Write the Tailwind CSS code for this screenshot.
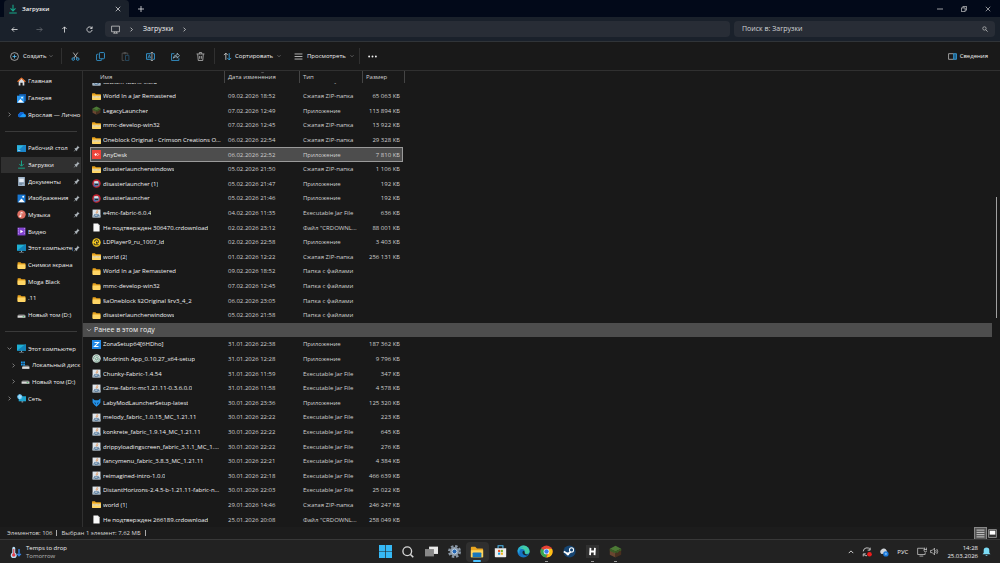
<!DOCTYPE html>
<html lang="ru">
  <head>
    <meta charset="UTF-8" />
    <title>Загрузки</title>
    <script src="https://cdn.jsdelivr.net/npm/@tailwindcss/browser@4"></script>
  </head>
  <body class="h-screen flex flex-col overflow-hidden bg-[#191919] text-[#f0f0f0] text-[6px] leading-[8px] font-['Open_Sans','Noto_Sans',sans-serif]">
    <!-- Icon set -->
    <svg class="hidden">
      <symbol id="folder" viewBox="0 0 16 16"><path d="M1 3q0-1 1-1h4l2 2h6q1 0 1 1v8H1z" fill="#e8a21c" /><path d="M1 6h14v7q0 1-1 1H2q-1 0-1-1z" fill="#ffd666" /></symbol>
      <symbol id="zip" viewBox="0 0 16 16"><path d="M0 3q0-1 1-1h4l2 2h8q1 0 1 1v8H0z" fill="#e8a21c" /><path d="M0 6h16v7q0 1-1 1H1q-1 0-1-1z" fill="#ffd666" /><path d="M1 7.500h14v2.500H1z" fill="#e9dfbe" /><path d="M1 8.500h14" stroke="#a8a08a" stroke-width="1" stroke-dasharray="1.500 1" /></symbol>
      <symbol id="jar" viewBox="0 0 16 16"><path d="M1 1h14v14H1z" fill="#dfe6ec" /><path d="M1 11h14v4H1z" fill="#9fb2c2" /><path d="M9 2c2 2-3 3-1 6M10.500 4.500c-1 1-1 2 0 3" fill="none" stroke="#e07a2c" stroke-width="1.300" /><path d="M4.500 9.500h6v2q0 2-3 2t-3-2zM11 10q2 0 1 1.500l-2 1" fill="none" stroke="#436b92" stroke-width="1.200" /></symbol>
      <symbol id="doc" viewBox="0 0 16 16"><path d="M2.500 1h8l3 3v11h-11z" fill="#fafafa" /><path d="M10.500 1v3h3z" fill="#b9b9b9" /></symbol>
      <symbol id="anydesk" viewBox="0 0 16 16"><path d="M0 0h16v16H0z" fill="#ef443b" /><path d="M6.500 5.500 9 8l-2.500 2.500L4 8z" fill="#fff" /><path d="M9.500 5.500 12 8l-2.500 2.500" fill="none" stroke="#fff" stroke-width="1.200" /></symbol>
      <symbol id="disaster" viewBox="0 0 16 16"><circle cx="8" cy="8" r="7.500" fill="#c4202e" /><path d="M3 6q5-6 10 0v5q-5 5-10 0z" fill="#6f8ca8" /><path d="M4 4h7v3H4z" fill="#e6e6e6" /><path d="M5 9h6v2H5z" fill="#20262e" /><path d="M2 12l4-2 1 4z" fill="#3569c9" /></symbol>
      <symbol id="block" viewBox="0 0 16 16"><path d="M8 1l7 3.500-7 3.500-7-3.500z" fill="#4c7a35" /><path d="M1 4.500 8 8v7.500l-7-3.500z" fill="#6a4630" /><path d="M15 4.500 8 8v7.500l7-3.500z" fill="#48301f" /><path d="M1 4.500 8 8v2L6 8.500V10L4 8v1L1 7zM15 4.500 8 8v2l2-1.500V10l3-3 2 0z" fill="#385f27" /></symbol>
      <symbol id="ldplayer" viewBox="0 0 16 16"><circle cx="8" cy="8" r="7.500" fill="#f5c921" /><path d="M4.500 6.500a3.500 3.500 0 0 1 7 0q0 3-3.500 3v-3" fill="none" stroke="#222" stroke-width="1.700" /><path d="M4 9v3h8" fill="none" stroke="#222" stroke-width="1.500" /></symbol>
      <symbol id="zona" viewBox="0 0 16 16"><path d="M0 0h16v16H0z" fill="#238ae6" /><path d="M4.500 4.500h7l-7 7h7" fill="none" stroke="#fff" stroke-width="2" /></symbol>
      <symbol id="modrinth" viewBox="0 0 16 16"><circle cx="8" cy="8" r="7.500" fill="#d5dedb" /><path d="M3 9a5 5 0 0 1 9-4M13 8a5 5 0 0 1-9 4M6 8l2-2 3 1-1 3-3 1z" fill="none" stroke="#5b9678" stroke-width="1.300" /></symbol>
      <symbol id="laby" viewBox="0 0 16 16"><path d="M1 1l4 3h6l4-3v7l-3 4-4 3.500L4 12 1 8z" fill="#2492e8" /><path d="M4 7l3 2-1 3zM12 7 9 9l1 3z" fill="#0c3f74" /></symbol>
      <symbol id="home" viewBox="0 0 16 16"><path d="M3 7l5-5 5 5v8h-3v-5H6v5H3z" fill="#d9dde2" /><path d="M1 8.500 8 2l7 6.500" fill="none" stroke="#e8702a" stroke-width="2.200" stroke-linejoin="round" /></symbol>
      <symbol id="picture" viewBox="0 0 16 16"><path d="M1 1h14v14H1z" fill="#1877d3" /><path d="M2 14.500 8 8l6 6.500z" fill="#fff" /><circle cx="11" cy="5" r="1.700" fill="#fff" /></symbol>
      <symbol id="gallery" viewBox="0 0 16 16"><path d="M4 0h12v13H4z" fill="#1157a4" /><path d="M0 3h13v13H0z" fill="#2a97f0" /><path d="M1 15l5-6 6 6z" fill="#fff" /><circle cx="9" cy="6.500" r="1.500" fill="#fff" /></symbol>
      <symbol id="cloud" viewBox="0 0 16 16"><path d="M4 13a4 4 0 0 1 0-7 5 5 0 0 1 9 1 3 3 0 0 1 0 6z" fill="#1b9bfa" /><path d="M4 6a5 5 0 0 1 9 1q-3-1-5 2l-4 4a4 4 0 0 1 0-7z" fill="#1262d0" /></symbol>
      <symbol id="desktop" viewBox="0 0 16 16"><path d="M0 2h16v12H0z" fill="#2cb3df" /><path d="M0 14 12 2h4v12z" fill="#1b85c9" /><path d="M2 11h4v1H2z" fill="#fff" /></symbol>
      <symbol id="down" viewBox="0 0 16 16"><path d="M8 1v9.500M4 7l4 4 4-4M2 14.500h12" fill="none" stroke="#16a98c" stroke-width="1.700" /></symbol>
      <symbol id="document" viewBox="0 0 16 16"><path d="M2 0h12v16H2z" fill="#9fb4c9" /><path d="M4 3h8v6H4z" fill="#e5edf5" /><path d="M4 11h8M4 13h5" stroke="#4b6580" /></symbol>
      <symbol id="music" viewBox="0 0 16 16"><circle cx="8" cy="8" r="7.500" fill="#dd6e62" /><path d="M7 11V4l4 1.500" fill="none" stroke="#fff" stroke-width="1.300" /><circle cx="5.800" cy="11" r="1.800" fill="#fff" /></symbol>
      <symbol id="video" viewBox="0 0 16 16"><path d="M1 1h14v14H1z" fill="#8243cf" /><path d="M2.500 2v12M13.500 2v12" stroke="#d9b9ff" stroke-width="1.300" stroke-dasharray="1.500 1.500" /><path d="M6 5l5 3-5 3z" fill="#fff" /></symbol>
      <symbol id="pc" viewBox="0 0 16 16"><path d="M0 1h16v11H0z" fill="#1fb0d4" /><path d="M0 12 14 1h2v11z" fill="#1383b8" /><path d="M7 12h2v2h3v1H4v-1h3z" fill="#8fa3b2" /></symbol>
      <symbol id="drive" viewBox="0 0 16 16"><path d="M3 6h10l2 2H1z" fill="#858585" /><path d="M1 8h14v4H1z" fill="#dadada" /><path d="M10 10h3" stroke="#36b157" stroke-width="1.500" /></symbol>
      <symbol id="sysdrive" viewBox="0 0 16 16"><path d="M4 8h9l2 2H3z" fill="#858585" /><path d="M2 10h13v4H2z" fill="#dadada" /><path d="M0 1h3v3H0zM4 1h3v3H4zM0 5h3v3H0zM4 5h3v3H4z" fill="#1b9af0" /></symbol>
      <symbol id="network" viewBox="0 0 16 16"><path d="M3 4h13v9H3z" fill="#1fa5d0" /><path d="M8 13h3v2H8z" fill="#8fa3b2" /><circle cx="5" cy="5" r="4.500" fill="#58bdf0" /><path d="M1 5h8M5 1q-3 4 0 8M5 1q3 4 0 8" stroke="#d5f0ff" fill="none" /></symbol>
      <symbol id="pin" viewBox="0 0 16 16"><path d="M10 1l5 5-2 1-3 3-1 4-6-6 4-1 3-3zM5.500 9.500 7 11l-6 5z" fill="#a9b1b7" /></symbol>
      <symbol id="right" viewBox="0 0 16 16"><path d="M5 2l6 6-6 6" fill="none" stroke="currentColor" stroke-width="2.200" /></symbol>
      <symbol id="chevron" viewBox="0 0 16 16"><path d="M2 5l6 6 6-6" fill="none" stroke="currentColor" stroke-width="2.200" /></symbol>
      <symbol id="close" viewBox="0 0 16 16"><path d="M2 2l12 12M14 2 2 14" fill="none" stroke="currentColor" stroke-width="1.800" /></symbol>
      <symbol id="arrow" viewBox="0 0 16 16"><path d="M15 8H2M7 3 2 8l5 5" fill="none" stroke="currentColor" stroke-width="1.800" /></symbol>
      <symbol id="search" viewBox="0 0 16 16"><circle cx="6.500" cy="6.500" r="4.500" fill="none" stroke="currentColor" stroke-width="1.800" /><path d="M10 10l5 5" stroke="currentColor" stroke-width="2" /></symbol>
      <symbol id="monitor" viewBox="0 0 16 16"><path d="M1 2h14v10H1zM6 12v2.500M10 12v2.500M4 14.500h8" fill="none" stroke="currentColor" stroke-width="1.400" /></symbol>
    </svg>

    <!-- Title bar -->
    <header class="h-[17px] shrink-0 flex items-center bg-[#020919] pl-1">
      <div class="h-full w-[125px] flex items-center rounded-t bg-[#1a212b] pl-1 pr-2">
        <svg class="size-[10px]"><use href="#down" /></svg>
        <span class="ml-1 flex-1 font-semibold">Загрузки</span>
        <button aria-label="Закрыть вкладку"><svg class="size-[6px]"><use href="#close" /></svg></button>
      </div>
      <button class="ml-[9px]" aria-label="Новая вкладка">
        <svg class="size-[6px]" viewBox="0 0 16 16"><path d="M8 0v16M0 8h16" stroke="currentColor" stroke-width="2" /></svg>
      </button>
      <div class="ml-auto flex text-[#d0d0d0]">
        <button class="w-6 flex justify-center" aria-label="Свернуть"><svg class="size-[6px]" viewBox="0 0 16 16"><path d="M0 8h16" stroke="currentColor" stroke-width="2" /></svg></button>
        <button class="w-6 flex justify-center" aria-label="Восстановить"><svg class="size-[6px]" viewBox="0 0 16 16"><path d="M1 5h10v10H1zM5 4V1h10v10h-3" fill="none" stroke="currentColor" stroke-width="2" /></svg></button>
        <button class="w-6 flex justify-center" aria-label="Закрыть"><svg class="size-[6px]"><use href="#close" /></svg></button>
      </div>
    </header>

    <!-- Navigation -->
    <nav class="h-[25px] shrink-0 flex items-center bg-[#1a212b] border-b border-[#303438] pl-[2px] pr-[5px]">
      <button class="w-[25px] flex justify-center" aria-label="Назад"><svg class="size-[7px]"><use href="#arrow" /></svg></button>
      <button class="w-[25px] flex justify-center text-[#666b72]" aria-label="Вперёд"><svg class="size-[7px] rotate-180"><use href="#arrow" /></svg></button>
      <button class="w-[25px] flex justify-center" aria-label="Вверх"><svg class="size-[7px] rotate-90"><use href="#arrow" /></svg></button>
      <button class="w-[25px] flex justify-center" aria-label="Обновить"><svg class="size-[7px]" viewBox="0 0 16 16"><path d="M14 9a6 6 0 1 1-2-5.500L14 5M14 1v4.500H9.500" fill="none" stroke="currentColor" stroke-width="1.800" /></svg></button>
      <div class="ml-[3px] h-4 flex-1 flex items-center rounded-sm bg-[#282d36] pl-[6px]">
        <svg class="size-[9px] text-[#c8c8c8]"><use href="#monitor" /></svg>
        <svg class="ml-[9px] size-[5px]"><use href="#right" /></svg>
        <a href="#" class="ml-[9px] text-[7px]">Загрузки</a>
        <svg class="ml-[9px] size-[5px]"><use href="#right" /></svg>
      </div>
      <label class="ml-1 h-4 w-[261px] flex items-center rounded-sm bg-[#282d36] pl-2 pr-[7px]">
        <input type="search" aria-label="Поиск" placeholder="Поиск в: Загрузки" class="flex-1 text-[7px] outline-none placeholder:text-[#d0d2d5]" />
        <svg class="size-[6px] text-[#c8c8c8]"><use href="#search" /></svg>
      </label>
    </nav>

    <!-- Commands -->
    <div class="h-[29px] shrink-0 flex items-center border-b border-[#303030] pr-3">
      <button class="ml-[10px] w-[51px] flex items-center">
        <svg class="size-[9px]" viewBox="0 0 16 16"><circle cx="8" cy="8" r="7" fill="none" stroke="#ccc" stroke-width="1.300" /><path d="M8 4.500v7M4.500 8h7" stroke="#55b9ee" stroke-width="1.500" /></svg>
        <span class="ml-1 flex-1 text-left">Создать</span>
        <svg class="mr-2 size-[4px] text-[#999]"><use href="#chevron" /></svg>
      </button>
      <div class="h-4 w-px bg-[#303030]"></div>
      <div class="ml-px flex">
        <button class="w-[25px] flex justify-center" aria-label="Вырезать"><svg class="size-[9px]" viewBox="0 0 16 16"><path d="M4 1l7 10M12 1 5 11" stroke="#ccc" stroke-width="1.400" /><circle cx="4" cy="12.500" r="2.300" fill="none" stroke="#38a7e8" stroke-width="1.500" /><circle cx="12" cy="12.500" r="2.300" fill="none" stroke="#38a7e8" stroke-width="1.500" /></svg></button>
        <button class="w-[25px] flex justify-center" aria-label="Копировать"><svg class="size-[9px]" viewBox="0 0 16 16"><path d="M4 4H2q-1 0-1 1v9q0 1 1 1h7q1 0 1-1v-1" fill="none" stroke="#38a7e8" stroke-width="1.400" /><rect x="6" y="1" width="9" height="11" rx="1.500" fill="none" stroke="#38a7e8" stroke-width="1.500" /></svg></button>
        <button class="w-[25px] flex justify-center" aria-label="Вставить" disabled><svg class="size-[9px]" viewBox="0 0 16 16"><path d="M6 15H2V2h10v3M5 1h4v2H5z" fill="none" stroke="#555" stroke-width="1.400" /><path d="M8 6h6v9H8z" fill="none" stroke="#2a5470" stroke-width="1.400" /></svg></button>
        <button class="w-[25px] flex justify-center" aria-label="Переименовать"><svg class="size-[9px]" viewBox="0 0 16 16"><path d="M9 3H1v10h8M12 3h3v10h-3" fill="none" stroke="#38a7e8" stroke-width="1.500" /><path d="M3.500 11 6 5l2.500 6M4.500 9h3" fill="none" stroke="#38a7e8" stroke-width="1.200" /><path d="M10.500 1v14M8.500 .7h4M8.500 15.300h4" stroke="#ccc" stroke-width="1.300" /></svg></button>
        <button class="w-[25px] flex justify-center" aria-label="Поделиться"><svg class="size-[9px]" viewBox="0 0 16 16"><path d="M6 3H1v12h13v-4" fill="none" stroke="#38a7e8" stroke-width="1.400" /><path d="M4 11q1-6 7-6V2l4 4.500-4 4.500V8q-4 0-7 3z" fill="none" stroke="#a8cde2" stroke-width="1.300" /></svg></button>
        <button class="w-[25px] flex justify-center" aria-label="Удалить"><svg class="size-[9px]" viewBox="0 0 16 16"><path d="M1 3.500h14M3 4l1 11h8l1-11M6 3V1h4v2M6.500 7v5M9.500 7v5" fill="none" stroke="#ccc" stroke-width="1.300" /></svg></button>
      </div>
      <div class="ml-px h-4 w-px bg-[#303030]"></div>
      <button class="ml-2 w-[70px] flex items-center">
        <svg class="size-[9px]" viewBox="0 0 16 16"><path d="M5 14V2M1.500 5.500 5 2l3.500 3.500" fill="none" stroke="#ccc" stroke-width="1.500" /><path d="M11 2v12M7.500 10.500 11 14l3.500-3.500" fill="none" stroke="#38a7e8" stroke-width="1.500" /></svg>
        <span class="ml-[3px]">Сортировать</span>
        <svg class="ml-1 size-[4px] text-[#999]"><use href="#chevron" /></svg>
      </button>
      <button class="flex items-center w-[66px]">
        <svg class="ml-px size-[9px]" viewBox="0 0 16 16"><path d="M1 3.500h14M1 8h14M1 12.500h14" stroke="#ccc" stroke-width="1.500" /></svg>
        <span class="ml-1">Просмотреть</span>
        <svg class="ml-1 size-[4px] text-[#999]"><use href="#chevron" /></svg>
      </button>
      <div class="h-4 w-px bg-[#303030]"></div>
      <button class="ml-2 w-[9px]" aria-label="Ещё"><svg class="size-[9px]" viewBox="0 0 16 16" fill="currentColor"><circle cx="2" cy="8" r="1.700" /><circle cx="8" cy="8" r="1.700" /><circle cx="14" cy="8" r="1.700" /></svg></button>
      <button class="ml-auto flex items-center gap-[3px]">
        <svg class="size-[9px]" viewBox="0 0 16 16"><path d="M10 3H1v10h9" fill="none" stroke="#bbb" stroke-width="1.400" /><path d="M10 3h5v10h-5z" fill="#1f5f88" stroke="#38a7e8" stroke-width="1.400" /></svg>
        Сведения
      </button>
    </div>

    <main class="flex-1 min-h-0 flex">
      <aside class="w-[83px] shrink-0 overflow-hidden border-r border-[#303030] pt-[2px]">
        <ul id="sidebar" class="h-[334px] grid auto-rows-fr"></ul>
      </aside>

      <section class="flex-1 min-w-0 flex">
        <table class="flex-1 min-w-0 flex flex-col">
          <thead class="block pl-[9px]">
            <tr class="h-3 grid grid-cols-[133px_75px_63px_42px] text-left leading-[12px] text-[#d0d0d0]">
              <th class="pl-2 font-normal border-r border-[#454545]">Имя</th>
              <th class="relative pl-[3px] font-normal border-r border-[#454545]">Дата изменения<svg class="absolute top-0 left-9 size-[3px]"><use href="#chevron" /></svg></th>
              <th class="pl-[3px] font-normal border-r border-[#454545]">Тип</th>
              <th class="pl-[3px] font-normal border-r border-[#454545]">Размер</th>
            </tr>
          </thead>
          <tbody id="files" class="flex-1 min-h-0 flex flex-col"></tbody>
        </table>
        <div class="w-2 flex justify-center pt-[126px]">
          <div class="h-[121px] w-px bg-[#a0a0a0]"></div>
        </div>
      </section>
    </main>

    <!-- Status bar -->
    <footer class="h-3 shrink-0 flex items-center bg-[#1c1c1c] pl-[7px] pr-[3px] text-[#d8d8d8]">
      <span>Элементов: 106</span>
      <span class="mx-1 h-[6px] w-px bg-[#aaa]"></span>
      <span>Выбран 1 элемент: 7,62 МБ</span>
      <span class="ml-1 h-[6px] w-px bg-[#aaa]"></span>
      <button class="ml-auto border border-[#888] bg-[#555] p-px" aria-label="Таблица"><svg class="size-[9px]" viewBox="0 0 16 16"><path d="M1 2h14M1 6h14M1 10h14M1 14h14" stroke="#ddd" stroke-width="1.500" /></svg></button>
      <button class="ml-px" aria-label="Крупные значки"><svg class="size-[9px]" viewBox="0 0 16 16"><path d="M1 1h14v14H1z" fill="#333" stroke="#999" stroke-width="1.500" /><path d="M3 3h10v7H3z" fill="#fff" /></svg></button>
    </footer>

    <!-- Taskbar -->
    <div class="h-6 shrink-0 grid grid-cols-[1fr_auto_1fr] items-center bg-[#222222] border-t border-[#383838]">
      <button class="flex items-center text-left leading-[8px]">
        <svg class="ml-[10px] size-3" viewBox="0 0 16 16"><path d="M3 3a2 2 0 0 1 4 0v6a4 4 0 1 1-4 0z" fill="#b9ddf5" /><path d="M5 4v8" stroke="#e2404a" stroke-width="1.500" /><circle cx="5" cy="12" r="2.300" fill="#e2404a" /><path d="M12 4v9M9.500 10.500 12 13l2.500-2.500" fill="none" stroke="#3384e8" stroke-width="1.800" /></svg>
        <span class="ml-1">Temps to drop<br /><span class="text-[#b8b8b8]">Tomorrow</span></span>
      </button>
      <div class="h-full flex items-center">
        <button class="w-[23px] flex justify-center" aria-label="Пуск"><svg class="size-[13px]" viewBox="0 0 16 16"><path d="M0 0h7.600v7.600H0zM8.400 0H16v7.600H8.400zM0 8.400h7.600V16H0zM8.400 8.400H16V16H8.400z" fill="#36b9f6" /></svg></button>
        <button class="w-[23px] flex justify-center text-[#d5d5d5]" aria-label="Поиск"><svg class="size-3" viewBox="0 0 16 16"><circle cx="7" cy="7" r="5.800" fill="none" stroke="currentColor" stroke-width="1.800" /><path d="M11 11l4 4" stroke="currentColor" stroke-width="2.200" /></svg></button>
        <button class="w-[23px] flex justify-center" aria-label="Представление задач"><svg class="size-[13px]" viewBox="0 0 16 16"><path d="M5 2h11v9H5z" fill="#e8e8e8" /><path d="M0 5h11v9H0z" fill="#888" /></svg></button>
        <button class="w-[23px] flex justify-center" aria-label="Параметры"><svg class="size-[13px]" viewBox="0 0 16 16"><circle cx="8" cy="8" r="6.500" fill="none" stroke="#8b98a6" stroke-width="3" stroke-dasharray="3 2.100" /><circle cx="8" cy="8" r="5.500" fill="#8b98a6" /><circle cx="8" cy="8" r="3" fill="#2266b5" stroke="#d9e5ef" /></svg></button>
        <button class="relative h-5 w-[23px] flex items-center justify-center rounded-sm bg-[#2f2f2f]" aria-label="Проводник"><svg class="size-[14px]" viewBox="0 0 16 16"><path d="M1 3q0-1 1-1h4l2 2h6q1 0 1 1v9H1z" fill="#e9a621" /><path d="M1 6h14v8H1z" fill="#ffd45c" /><path d="M3 14V9.500q0-1 1-1h8q1 0 1 1V14z" fill="#1777bd" /></svg><span class="absolute bottom-0 h-[2px] w-2 rounded-full bg-[#4cc2ff]"></span></button>
        <button class="w-[23px] flex justify-center" aria-label="Microsoft Store"><svg class="size-[13px]" viewBox="0 0 16 16"><path d="M5 4V1h6v3" fill="none" stroke="#4db8ee" stroke-width="1.300" /><path d="M1 4h14v10q0 1-1 1H2q-1 0-1-1z" fill="#eee" /><path d="M5 6h2.600v2.600H5z" fill="#f05126" /><path d="M8.400 6H11v2.600H8.400z" fill="#7db928" /><path d="M5 9.400h2.600V12H5z" fill="#1ba1e6" /><path d="M8.400 9.400H11V12H8.400z" fill="#f7b51a" /></svg></button>
        <button class="w-[23px] flex justify-center" aria-label="Edge"><svg class="size-[13px]" viewBox="0 0 16 16"><circle cx="8" cy="8" r="7.500" fill="#1573c4" /><path d="M.6 7A7.500 7.500 0 0 1 15.500 8q0 3-3.500 3t-2.500-2Q10 5 6 5T.6 7z" fill="#41cda6" /><path d="M1 6q2-4 7-3-6 1-5 8-3-2-2-5z" fill="#23a6dc" /><path d="M9.500 9q-1 3 5 3-3 2-6 0t-1-5q2 0 2 2z" fill="#18252f" /></svg></button>
        <button class="relative h-5 w-[23px] flex items-center justify-center" aria-label="Chrome"><svg class="size-[13px]" viewBox="0 0 16 16"><circle cx="8" cy="8" r="7.500" fill="#e64235" /><path d="M1.500 4.300 8 8l0 7.500A7.500 7.500 0 0 1 1.500 4.300z" fill="#35a852" /><path d="M8 4.500h6.700A7.500 7.500 0 0 1 8 15.500L11 9z" fill="#fbc116" /><circle cx="8" cy="8" r="3.500" fill="#fff" /><circle cx="8" cy="8" r="2.700" fill="#3b7ded" /></svg><span class="absolute bottom-0 h-px w-[3px] bg-[#999]"></span></button>
        <button class="w-[23px] flex justify-center" aria-label="Steam"><svg class="size-[13px]" viewBox="0 0 16 16"><circle cx="8" cy="8" r="7.500" fill="#164572" /><path d="M1 8l5 3 4-3" fill="none" stroke="#fff" stroke-width="2" /><circle cx="10.500" cy="6" r="2.500" fill="#164572" stroke="#fff" stroke-width="1.300" /><circle cx="6" cy="11" r="1.800" fill="#fff" /></svg></button>
        <button class="relative h-5 w-[23px] flex items-center justify-center" aria-label="Лаунчер"><svg class="size-[13px]" viewBox="0 0 16 16"><path d="M0 0h16v16H0z" fill="#303030" /><path d="M5.500 3.500 5 12.500M11 3.500l-.5 9M5 8h6" stroke="#fff" stroke-width="2.200" /></svg><span class="absolute bottom-0 h-px w-[3px] bg-[#999]"></span></button>
        <button class="relative h-5 w-[23px] flex items-center justify-center" aria-label="Minecraft"><svg class="size-[13px]"><use href="#block" /></svg><span class="absolute bottom-0 h-px w-[3px] bg-[#999]"></span></button>
      </div>
      <div class="flex items-center justify-end pr-[9px]">
        <button aria-label="Скрытые значки"><svg class="size-[6px] rotate-180"><use href="#chevron" /></svg></button>
        <svg class="ml-2 size-[10px]" viewBox="0 0 16 16"><path d="M2 7a6 6 0 0 1 11-3M13 1v4H9M2 15v-4h4M3 12a6 6 0 0 0 5 2" fill="none" stroke="#ccc" stroke-width="1.500" /><circle cx="12" cy="11.500" r="3.700" fill="#ee1c1c" /></svg>
        <svg class="ml-[7px] size-[10px]" viewBox="0 0 16 16"><path d="M4 11a4 4 0 0 1 0-7 5 5 0 0 1 8 1l2 5z" fill="#cfd3d8" /><circle cx="11" cy="11" r="4.300" fill="#1778dc" /><path d="M9 11h4M11 9v4" stroke="#a9d5ff" /></svg>
        <span class="ml-2">РУС</span>
        <svg class="ml-[9px] size-[10px]" viewBox="0 0 16 16"><path d="M11 2H1v10h12V9M4 14.500h6M12 1v3M15 1v3M11 4h5v2q-1 2-3 2-2-1-2-4" fill="none" stroke="#ccc" stroke-width="1.200" /></svg>
        <svg class="ml-[3px] size-[9px]" viewBox="0 0 16 16"><path d="M1 6h3l4-4v12l-4-4H1zM10 5.500q2 2.500 0 5M12 3.500q3.500 4.500 0 9" fill="none" stroke="#ccc" stroke-width="1.300" /></svg>
        <time class="ml-2 text-right">14:28<br />25.03.2026</time>
        <svg class="ml-1 size-[9px]" viewBox="0 0 16 16"><path d="M8 1q5 0 5 5v4l2 3H1l2-3V6q0-5 5-5zM6 14h4q-2 3-4 0z" fill="#7cdcf5" /></svg>
      </div>
    </div>

    <script>
      // icon, label, arrow, pinned, nested; null draws a separator
      const places = [
        ["home", "Главная"],
        ["gallery", "Галерея"],
        ["cloud", "Ярослав — Лично", "right"],
        null,
        ["desktop", "Рабочий стол", "", true],
        ["down", "Загрузки", "", true],
        ["document", "Документы", "", true],
        ["picture", "Изображения", "", true],
        ["music", "Музыка", "", true],
        ["video", "Видео", "", true],
        ["pc", "Этот компьютер", "", true],
        ["folder", "Снимки экрана"],
        ["folder", "Moga Black"],
        ["folder", ".11"],
        ["drive", "Новый том (D:)"],
        null,
        ["pc", "Этот компьютер", "chevron"],
        ["sysdrive", "Локальный диск", "right", false, true],
        ["drive", "Новый том (D:)", "right", false, true],
        ["network", "Сеть", "right"],
      ];

      const ZIP = "Сжатая ZIP-папка";
      const APP = "Приложение";
      const JAR = "Executable Jar File";
      const DIR = "Папка с файлами";
      const PART = 'Файл "CRDOWNLOAD"';

      const recent = [
        ["zip", "World In a Jar Remastered", "09.02.2026 18:52", ZIP, "65 063 КБ"],
        ["block", "LegacyLauncher", "07.02.2026 12:49", APP, "113 894 КБ"],
        ["zip", "mmc-develop-win32", "07.02.2026 12:45", ZIP, "13 922 КБ"],
        ["zip", "Oneblock Original - Crimson Creations Official", "06.02.2026 22:54", ZIP, "29 328 КБ"],
        ["anydesk", "AnyDesk", "06.02.2026 22:52", APP, "7 810 КБ"],
        ["zip", "disasterlauncherwindows", "05.02.2026 21:50", ZIP, "1 106 КБ"],
        ["disaster", "disasterlauncher (1)", "05.02.2026 21:47", APP, "192 КБ"],
        ["disaster", "disasterlauncher", "05.02.2026 21:46", APP, "192 КБ"],
        ["jar", "e4mc-fabric-6.0.4", "04.02.2026 11:35", JAR, "636 КБ"],
        ["doc", "Не подтвержден 306470.crdownload", "02.02.2026 23:12", PART, "88 001 КБ"],
        ["ldplayer", "LDPlayer9_ru_1007_ld", "02.02.2026 22:58", APP, "3 403 КБ"],
        ["zip", "world (2)", "01.02.2026 12:22", ZIP, "256 131 КБ"],
        ["folder", "World In a Jar Remastered", "09.02.2026 18:52", DIR, ""],
        ["folder", "mmc-develop-win32", "07.02.2026 12:45", DIR, ""],
        ["folder", "§aOneblock §2Original §rv3_4_2", "06.02.2026 23:05", DIR, ""],
        ["folder", "disasterlauncherwindows", "05.02.2026 21:58", DIR, ""],
      ];

      const earlier = [
        ["zona", "ZonaSetup64[6HDho]", "31.01.2026 22:38", APP, "187 362 КБ"],
        ["modrinth", "Modrinth App_0.10.27_x64-setup", "31.01.2026 12:28", APP, "9 796 КБ"],
        ["jar", "Chunky-Fabric-1.4.54", "31.01.2026 11:59", JAR, "347 КБ"],
        ["jar", "c2me-fabric-mc1.21.11-0.3.6.0.0", "31.01.2026 11:58", JAR, "4 578 КБ"],
        ["laby", "LabyModLauncherSetup-latest", "30.01.2026 23:36", APP, "125 320 КБ"],
        ["jar", "melody_fabric_1.0.15_MC_1.21.11", "30.01.2026 22:22", JAR, "223 КБ"],
        ["jar", "konkrete_fabric_1.9.14_MC_1.21.11", "30.01.2026 22:22", JAR, "645 КБ"],
        ["jar", "drippyloadingscreen_fabric_3.1.1_MC_1.21.11", "30.01.2026 22:22", JAR, "276 КБ"],
        ["jar", "fancymenu_fabric_3.8.3_MC_1.21.11", "30.01.2026 22:21", JAR, "4 384 КБ"],
        ["jar", "reimagined-intro-1.0.0", "30.01.2026 22:18", JAR, "466 639 КБ"],
        ["jar", "DistantHorizons-2.4.5-b-1.21.11-fabric-neoforge", "30.01.2026 22:03", JAR, "25 022 КБ"],
        ["zip", "world (1)", "29.01.2026 14:46", ZIP, "246 247 КБ"],
        ["doc", "Не подтвержден 266189.crdownload", "25.01.2026 20:08", PART, "258 049 КБ"],
      ];

      function placeItem(place) {
        if (!place) {
          return '<li class="flex items-center px-[5px]"><hr class="w-full border-[#3a3a3a]" /></li>';
        }
        const [icon, label, arrow, pinned, nested] = place;
        const active = label === "Загрузки" ? "bg-[#303030]" : "";
        const indent = nested ? "pl-[10px]" : "pl-[6px]";
        return `<li class="ml-px mr-px flex min-w-0 ${active}">
          <a href="#" class="flex w-full min-w-0 items-center ${indent}">
            <svg class="size-[5px] shrink-0 text-[#aaa]">${arrow ? `<use href="#${arrow}" />` : ""}</svg>
            <svg class="ml-[5px] size-[9px] shrink-0"><use href="#${icon}" /></svg>
            <span class="ml-[2px] flex-1 overflow-hidden whitespace-nowrap">${label}</span>
            ${pinned ? '<svg class="mr-px size-[7px] shrink-0"><use href="#pin" /></svg>' : ""}
          </a>
        </li>`;
      }

      function fileCells([icon, name, date, type, size]) {
        return `<td class="flex min-w-0 items-center pl-[2px] pr-[3px]">
            <svg class="size-[9px] shrink-0"><use href="#${icon}" /></svg>
            <span class="ml-[2px] truncate">${name}</span>
          </td>
          <td class="pl-1 text-[#d0d0d0]">${date}</td>
          <td class="truncate pl-1 pr-1 text-[#d0d0d0]">${type}</td>
          <td class="pr-[3px] text-right whitespace-nowrap text-[#d0d0d0]">${size}</td>`;
      }

      function fileRow(file) {
        const frame = file[1] === "AnyDesk" ? "outline outline-[#9a9a9a] -outline-offset-1 bg-[#4d4d4d]" : "";
        return `<tr class="ml-[7px] flex-1 w-[313px] grid grid-cols-[134px_75px_63px_41px] items-center ${frame}">${fileCells(file)}</tr>`;
      }

      // Row scrolled half under the column headings
      const scrolled = ["jar", "sodium-fabric-0.8.2", "10.02.2026 12:30", JAR, "65 063 КБ"];

      document.getElementById("sidebar").innerHTML = places.map(placeItem).join("");
      document.getElementById("files").innerHTML =
        `<tr class="ml-[7px] h-[3px] mb-[3px] w-[313px] grid grid-cols-[134px_75px_63px_41px] content-end overflow-hidden">${fileCells(scrolled)}</tr>` +
        recent.map(fileRow).join("") +
        `<tr class="flex-1 flex items-center bg-[#4d4d4d]">
          <th colspan="4" class="flex items-center pl-[3px] text-[7px] font-normal">
            <svg class="mr-[2px] size-[6px] text-[#aaa]"><use href="#chevron" /></svg>Ранее в этом году
          </th>
        </tr>` +
        earlier.map(fileRow).join("");
    </script>
  </body>
</html>
